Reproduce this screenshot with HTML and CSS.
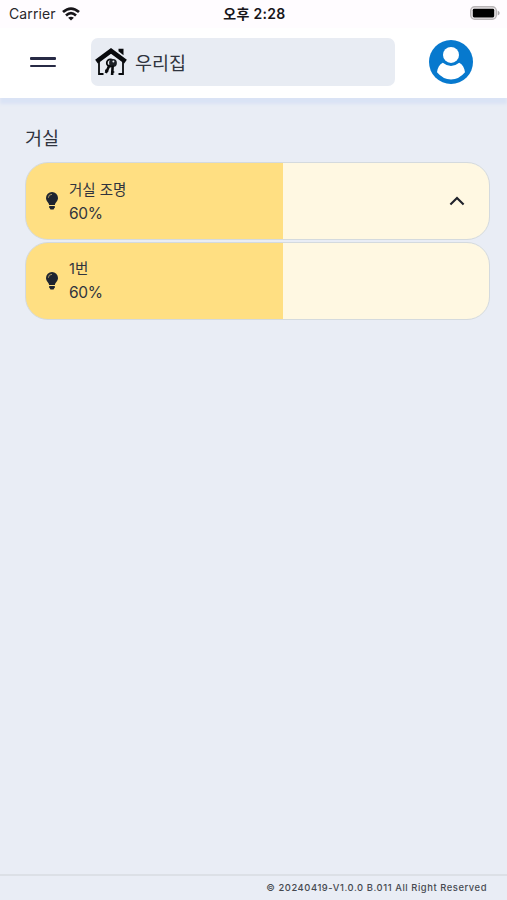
FILE: index.html
```html
<!DOCTYPE html>
<html lang="ko">
<head>
<meta charset="utf-8">
<meta name="viewport" content="width=device-width, initial-scale=1">
<title>우리집</title>
<link rel="stylesheet" href="styles.css">
</head>
<body>
<div class="status">
  <div class="carrier"><span>Carrier</span>
    <svg class="wifi" viewBox="0 0 18 14" fill="none" stroke="#171519" stroke-width="2.7"><path d="M1 5.1Q9-2 17 5.1M4 8.4Q9 4 14 8.4"/><path d="M9 13.6 6.1 10.8Q9 8.5 11.9 10.8Z" fill="#171519" stroke="none"/></svg>
  </div>
  <div class="clock">오후 2:28</div>
  <svg class="battery" viewBox="0 0 31 15"><rect x="1.7" y=".7" width="25.6" height="12.6" rx="4" fill="#eeeaed" stroke="#b9b5b7" stroke-width="1.4"/><rect x="3.8" y="2.8" width="21.4" height="8.6" rx="1.4" fill="#000"/><path d="M28.7 4.5v5q2-1 2-2.5t-2-2.5" fill="#aaa7aa"/></svg>
</div>
<header class="bar">
  <button class="menu" aria-label="메뉴"><span></span><span></span></button>
  <div class="home">
    <svg class="house" viewBox="0 0 32 28" fill="none" stroke="#080a0d">
      <path d="M1.5 13.6 16 2.9l14.5 10.7" stroke-width="4.6"/>
      <path d="M23.5.8h5v6.4l-5-4Z" fill="#080a0d" stroke="none"/>
      <path d="M4 14v12h4.5M28 14v12h-4.5" stroke-width="1.8"/>
      <circle cx="15.4" cy="14.9" r="3.6" stroke-width="1.8"/>
      <circle cx="18" cy="14.9" r="3.9" fill="#1c2026" stroke="none"/>
      <circle cx="18.4" cy="13.4" r="1" fill="#e8ecf3" stroke="none"/>
      <path d="m14.6 17-3.8 8M17.7 17.5l-.6 9.5" stroke-width="2.6"/>
      <path d="m13.3 23.5-3-1.5M17 24h2.3" stroke-width="1.5"/>
    </svg>
    <span>우리집</span>
  </div>
  <svg class="user" viewBox="0 0 44 44"><circle cx="22" cy="22" r="22" fill="#0779ce"/><circle cx="22" cy="14.9" r="8" fill="#fff"/><path d="M13.8 22.7Q22 29.2 30.2 22.7C33.5 24.4 35.6 28 36 32.2Q30 39.4 22 39.4T8 32.2C8.4 28 10.5 24.4 13.8 22.7Z" fill="#fff"/></svg>
</header>
<main>
  <h1>거실</h1>
  <section class="card">
    <svg class="bulb" viewBox="0 0 12 18"><path d="M6 0a6 6 0 0 0-6 6c0 3.2 2.8 4.2 3.1 7h5.8C9.2 10.2 12 9.2 12 6a6 6 0 0 0-6-6Z" fill="#1e2430"/><path d="M2.3 5.8A3.7 3.7 0 0 1 6 2.3" fill="none" stroke="#b5a06a" stroke-width=".9"/><path d="M3.2 14h5.6v1.3L7.5 17.6h-3L3.2 15.3Z" fill="#1e2430"/></svg>
    <div class="label"><div class="name">거실 조명</div><div class="level">60%</div></div>
    <svg class="chevron" viewBox="0 0 16 10" fill="none" stroke="#20222b" stroke-width="2.1"><path d="m1.4 8.5 6.6-6.6 6.6 6.6"/></svg>
  </section>
  <section class="card">
    <svg class="bulb" viewBox="0 0 12 18"><path d="M6 0a6 6 0 0 0-6 6c0 3.2 2.8 4.2 3.1 7h5.8C9.2 10.2 12 9.2 12 6a6 6 0 0 0-6-6Z" fill="#1e2430"/><path d="M2.3 5.8A3.7 3.7 0 0 1 6 2.3" fill="none" stroke="#b5a06a" stroke-width=".9"/><path d="M3.2 14h5.6v1.3L7.5 17.6h-3L3.2 15.3Z" fill="#1e2430"/></svg>
    <div class="label"><div class="name">1번</div><div class="level">60%</div></div>
  </section>
</main>
<footer>© 20240419-V1.0.0 B.011 All Right Reserved</footer>
</body>
</html>
```
FILE: styles.css
```css
* { box-sizing: border-box; }
body {
  margin: 0;
  height: 900px;
  display: flex;
  flex-direction: column;
  background: #e9edf5;
  color: #30343e;
  font-family: Inter, "Noto Sans CJK KR", sans-serif;
}
svg { display: block; flex: none; }
.status {
  height: 28px;
  padding: 0 7px 0 9px;
  display: grid;
  grid-template-columns: 1fr auto 1fr;
  align-items: center;
  background: #fffcff;
  color: #29272b;
  font-size: 14px;
  line-height: 28px;
}
.carrier { display: flex; align-items: center; gap: 6px; letter-spacing: 0.1px; }
.wifi { width: 18px; height: 14px; }
.clock { font-weight: 600; color: #171519; white-space: nowrap; letter-spacing: 0.3px; }
.battery { width: 31px; height: 15px; justify-self: end; margin-top: -1px; }
.bar {
  height: 70px;
  padding: 0 34px 2px 30px;
  display: flex;
  align-items: center;
  background: #fff;
  box-shadow: 0 6px 3px #dae3f5;
  clip-path: inset(0 0 -12px 0);
}
.menu {
  width: 26px;
  padding: 0;
  border: 0;
  background: none;
  display: grid;
  gap: 5px;
}
.menu span { height: 2.5px; border-radius: 1px; background: #272a45; }
.home {
  width: 304px;
  height: 48px;
  margin: 0 auto 0 35px;
  padding-left: 4px;
  display: flex;
  align-items: center;
  gap: 8px;
  border-radius: 7px;
  background: #e8ecf3;
  font-size: 18.5px;
}
.house { width: 32px; height: 28px; }
.user { width: 44px; height: 44px; }
main { flex: 1; padding: 25px 17px 0 25px; }
h1 { margin: 0 0 9px; font-size: 18.5px; line-height: 30px; font-weight: 400; }
.card {
  height: 78px;
  margin-bottom: 2px;
  padding: 0 24px 0 20px;
  display: flex;
  align-items: center;
  border: 1px solid #d4dade;
  border-radius: 23px;
  background: linear-gradient(to right, #ffdf82 257.5px, #fff8e2 257.5px);
}
.bulb { width: 12px; height: 18px; }
.label { margin: 1px 0 0 11px; line-height: 24px; }
.card + .card .label { margin-top: -1px; }
.name { font-size: 14.5px; }
.level { font-size: 15.5px; letter-spacing: -0.3px; }
.chevron { width: 16px; height: 10px; margin: -1px 0 0 auto; }
footer {
  height: 26px;
  padding-right: 20px;
  border-top: 2px solid #dce0e6;
  text-align: right;
  font-size: 9.4px;
  font-weight: 500;
  line-height: 24px;
  letter-spacing: 0.56px;
  color: #464950;
}
```
